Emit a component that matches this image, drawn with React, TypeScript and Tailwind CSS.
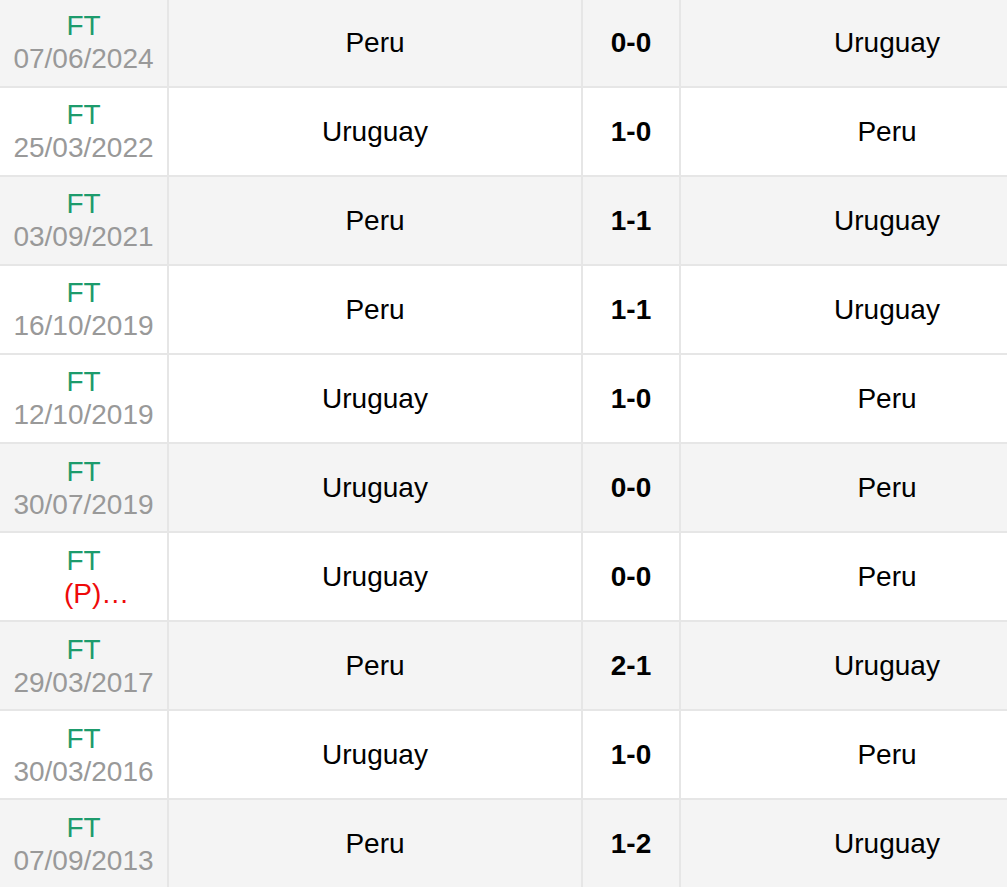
import React from "react";

type Row = { date: string; home: string; score: string; away: string; pen?: boolean; gray: boolean };

const rows: Row[] = [
  { date: "07/06/2024", home: "Peru", score: "0-0", away: "Uruguay", gray: true },
  { date: "25/03/2022", home: "Uruguay", score: "1-0", away: "Peru", gray: false },
  { date: "03/09/2021", home: "Peru", score: "1-1", away: "Uruguay", gray: true },
  { date: "16/10/2019", home: "Peru", score: "1-1", away: "Uruguay", gray: false },
  { date: "12/10/2019", home: "Uruguay", score: "1-0", away: "Peru", gray: false },
  { date: "30/07/2019", home: "Uruguay", score: "0-0", away: "Peru", gray: true },
  { date: "", home: "Uruguay", score: "0-0", away: "Peru", pen: true, gray: false },
  { date: "29/03/2017", home: "Peru", score: "2-1", away: "Uruguay", gray: true },
  { date: "30/03/2016", home: "Uruguay", score: "1-0", away: "Peru", gray: false },
  { date: "07/09/2013", home: "Peru", score: "1-2", away: "Uruguay", gray: true },
];

export default function App() {
  return (
    <div
      className="w-[1007px] h-[887px] overflow-hidden bg-white"
      style={{ fontFamily: '"Liberation Sans", Arial, sans-serif' }}
    >
      <div className="w-[1093px] -mt-[1.5px] flex flex-col">
        {rows.map((r, i) => (
          <div
            key={i}
            className={`flex h-[89.1px] shrink-0 border-b-2 border-[#e6e6e6] text-[28px] leading-[33px] ${
              r.gray ? "bg-[#f4f4f4]" : "bg-white"
            }`}
          >
            <div className="w-[169px] shrink-0 border-r-2 border-[#e6e6e6] flex flex-col justify-center">
              <div className="text-center text-[#1d9b6c]">FT</div>
              {r.pen ? (
                <div className="pl-[64px] text-left text-[#ee0a0a]">(P)…</div>
              ) : (
                <div className="text-center text-[#999999]">{r.date}</div>
              )}
            </div>
            <div className="w-[414px] shrink-0 border-r-2 border-[#e6e6e6] flex items-center justify-center text-black">
              {r.home}
            </div>
            <div className="w-[98px] shrink-0 border-r-2 border-[#e6e6e6] flex items-center justify-center font-bold text-black">
              {r.score}
            </div>
            <div className="w-[412px] shrink-0 flex items-center justify-center text-black">
              {r.away}
            </div>
          </div>
        ))}
      </div>
    </div>
  );
}
